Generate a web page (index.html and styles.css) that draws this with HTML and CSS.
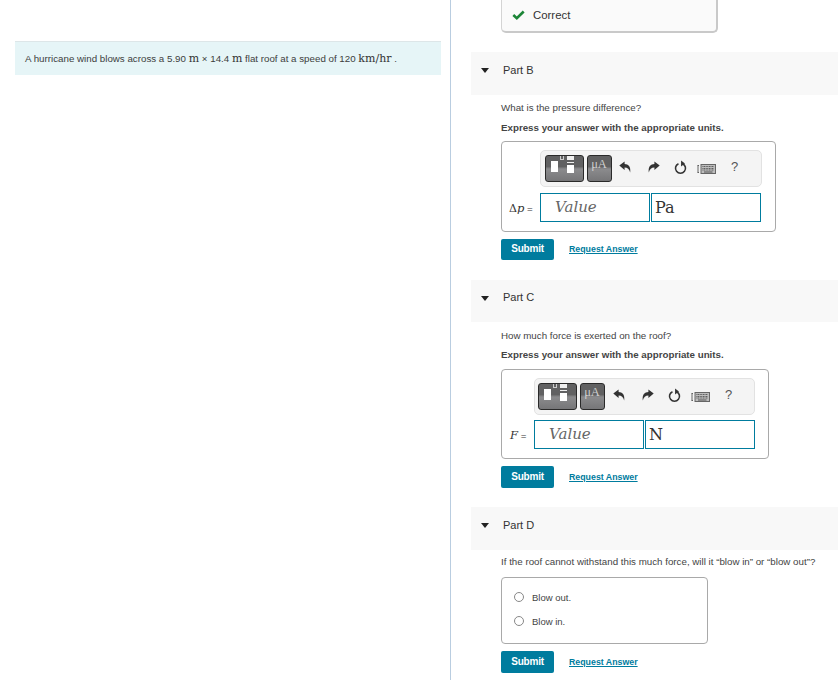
FILE: index.html
```html
<!DOCTYPE html>
<html lang="en">
<head>
<meta charset="utf-8">
<title>Hurricane roof problem</title>
<link rel="stylesheet" href="styles.css">
</head>
<body>
<svg class="defs" width="0" height="0" aria-hidden="true">
  <symbol id="undo" viewBox="0 0 12 12"><path d="M0.3 4.6 L5.6 0.4 V3 C9.4 3 12 5.8 11.2 11.6 C10.2 8.4 8.6 6.6 5.6 6.6 V9 Z"/></symbol>
  <symbol id="reset" viewBox="0 0 14 15"><path d="M4.8 3.4 A5.4 5.4 0 1 0 9.2 3.4" fill="none" stroke="currentColor" stroke-width="1.7"/><path d="M7.6 0 L7.6 6.4 L11.8 3.2 Z" fill="currentColor"/></symbol>
  <symbol id="kbd" viewBox="0 0 19 10"><path d="M0.5 1.5 H2 M0.5 8.5 H2 M1 1.5 V8.5" fill="none" stroke="#555" stroke-width="0.9"/><rect x="4" y="0.5" width="14.5" height="9" fill="#bdbdbd" stroke="#666"/><path d="M5.5 2.5 H17 M5.5 4.5 H17 M5.5 6 H17" stroke="#555" stroke-width="1" stroke-dasharray="1 .6"/><path d="M7 8 H15.5" stroke="#555"/></symbol>
</svg>
<div class="page">
  <aside class="left">
    <p class="intro">A hurricane wind blows across a 5.90 <span class="unit">m</span> × 14.4 <span class="unit">m</span> flat roof at a speed of 120 <span class="unit">km/hr</span> .</p>
  </aside>
  <main class="right">
    <div class="correct"><svg class="check" viewBox="0 0 13 10" width="13" height="10"><path d="M1.3 5 L4.8 8.2 L11.7 1.5" fill="none" stroke="#1c8537" stroke-width="2.6"/></svg><span>Correct</span></div>

    <section class="part part-b">
      <header class="part-head"><span class="tri"></span><span>Part B</span></header>
      <div class="part-body">
        <p class="q">What is the pressure difference?</p>
        <p class="ins">Express your answer with the appropriate units.</p>
        <div class="answer ans-b">
          <div class="toolbar">
            <span class="tbtn tpl"><i class="bl"></i><i class="sm"></i><i class="frac"></i></span>
            <span class="tbtn mu">μA</span>
            <svg class="ic ic1"><use href="#undo"/></svg>
            <svg class="ic ic2 flip"><use href="#undo"/></svg>
            <svg class="rs"><use href="#reset"/></svg>
            <svg class="kb"><use href="#kbd"/></svg>
            <span class="help">?</span>
          </div>
          <div class="row">
            <span class="lab"><span class="sym">Δ<em>p</em></span> =</span>
            <span class="field val">Value</span>
            <span class="field unit-f">Pa</span>
          </div>
        </div>
        <div class="acts"><span class="btn">Submit</span><a class="req" href="#">Request Answer</a></div>
      </div>
    </section>

    <section class="part part-c">
      <header class="part-head"><span class="tri"></span><span>Part C</span></header>
      <div class="part-body">
        <p class="q">How much force is exerted on the roof?</p>
        <p class="ins">Express your answer with the appropriate units.</p>
        <div class="answer ans-c">
          <div class="toolbar">
            <span class="tbtn tpl"><i class="bl"></i><i class="sm"></i><i class="frac"></i></span>
            <span class="tbtn mu">μA</span>
            <svg class="ic ic1"><use href="#undo"/></svg>
            <svg class="ic ic2 flip"><use href="#undo"/></svg>
            <svg class="rs"><use href="#reset"/></svg>
            <svg class="kb"><use href="#kbd"/></svg>
            <span class="help">?</span>
          </div>
          <div class="row">
            <span class="lab"><span class="sym"><em>F</em></span> =</span>
            <span class="field val">Value</span>
            <span class="field unit-f">N</span>
          </div>
        </div>
        <div class="acts"><span class="btn">Submit</span><a class="req" href="#">Request Answer</a></div>
      </div>
    </section>

    <section class="part part-d">
      <header class="part-head"><span class="tri"></span><span>Part D</span></header>
      <div class="part-body">
        <p class="q">If the roof cannot withstand this much force, will it “blow in” or “blow out”?</p>
        <div class="answer ans-d">
          <label class="opt"><span class="radio"></span>Blow out.</label>
          <label class="opt"><span class="radio"></span>Blow in.</label>
        </div>
        <div class="acts"><span class="btn">Submit</span><a class="req" href="#">Request Answer</a></div>
      </div>
    </section>
  </main>
</div>
</body>
</html>
```
FILE: styles.css
```css
* { box-sizing: border-box; }
html, body { margin: 0; padding: 0; background: #fff; }
body { width: 838px; height: 680px; overflow: hidden; font-family: "Liberation Sans", Arial, sans-serif; color: #333; }
.defs { position: absolute; }
p { margin: 0; }
.page { display: flex; height: 680px; }
.left { width: 451px; flex: none; padding: 41px 9px 0 15px; border-right: 1px solid #b9cde0; }
.intro { height: 34px; background: #e6f5f7; border-top: 1px solid #dde6e8; padding: 11px 0 0 10px; font-size: 9.75px; line-height: 12px; color: #3d3d3d; white-space: nowrap; }
.unit { font-family: "DejaVu Serif", "Liberation Serif", serif; font-size: 11px; color: #333; }
.right { flex: 1; padding-left: 20px; min-width: 0; }
.correct { margin-left: 30px; width: 217px; height: 33px; border: 1px solid #d4d4d4; border-top: 0; border-right: 2px solid #c9c9c9; border-bottom: 2px solid #c9c9c9; border-radius: 0 0 5px 5px; background: #fafafa; display: flex; align-items: center; padding: 0 0 2px 10px; font-size: 11.4px; color: #333; }
.check { margin-right: 8px; }
.part-head { height: 43px; background: #f8f8f8; display: flex; align-items: flex-start; padding: 12px 0 0 32px; font-size: 11px; line-height: 13px; position: relative; color: #333; }
.tri { position: absolute; left: 10px; top: 16px; border-left: 4.5px solid transparent; border-right: 4.5px solid transparent; border-top: 5px solid #222; }
.part-b { margin-top: 19px; }
.part-c { margin-top: 20px; }
.part-d { margin-top: 19px; }
.part-c .part-head { height: 42px; padding-top: 11px; }
.part-c .part-body { padding-top: 8px; }
.part-c .ins { margin-top: 7px; }
.part-c .answer { margin-top: 8px; }
.part-d .part-body { padding-top: 6px; }
.part-c .btn, .part-d .btn { height: 22px; line-height: 21px; }
.part-c .acts, .part-d .acts { height: 22px; }
.part-body { padding: 7px 0 0 30px; }
.q { font-size: 9.75px; line-height: 12px; color: #444; white-space: nowrap; }
.ins { margin-top: 8px; font-size: 9.75px; font-weight: bold; line-height: 12px; color: #444; }
.answer { border: 1px solid #a9a9a9; border-radius: 4px; margin-top: 7px; }
.ans-b { width: 275px; height: 91px; padding: 8px 0 0 38px; }
.ans-c { width: 268px; height: 90px; padding: 8px 0 0 32px; }
.part-d .ans-d { width: 207px; height: 67px; margin-top: 9px; padding: 13px 0 0 12px; }
.toolbar { width: 222px; height: 37px; background: #f4f4f4; border: 1px solid #e2e2e2; border-radius: 5px; display: flex; align-items: center; padding-left: 4px; position: relative; color: #444; }
.ans-c .toolbar { width: 221px; padding-left: 3px; }
.tbtn { display: block; height: 27px; border: 1px solid #2a2a2a; border-radius: 3px; background: linear-gradient(#616162 0, #616162 42%, #8b8b8d 52%, #767678 100%); position: relative; color: #d0d0d0; }
.tpl { width: 39px; }
.mu { width: 25px; margin-left: 3px; font-family: "Liberation Serif", serif; font-size: 12.5px; line-height: 16px; text-align: center; padding-right: 1px; }
.bl { position: absolute; left: 5px; top: 5px; width: 7px; height: 11px; background: #fff; }
.sm { position: absolute; left: 14px; top: 0; width: 4px; height: 4px; border: 1px solid #ccc; border-top: 0; }
.frac { position: absolute; left: 21px; top: 0; width: 7px; height: 17px; background: linear-gradient(#eee 0, #eee 4px, transparent 4px, transparent 6px, #eee 6px, #eee 7px, transparent 7px, transparent 9px, #fff 9px); }
.ic { width: 12px; height: 12px; fill: #333; position: absolute; top: 10px; }
.ic1 { left: 78px; }
.ic2 { left: 107px; }
.flip { transform: scaleX(-1); }
.rs { position: absolute; left: 133px; top: 9px; width: 13px; height: 15px; color: #333; }
.kb { position: absolute; left: 156px; top: 13px; width: 19px; height: 10px; }
.help { position: absolute; left: 190px; top: 8px; font-size: 13px; line-height: 15px; color: #555; }
.row { display: flex; align-items: center; margin-top: 6px; position: relative; }
.ans-c .row { margin-top: 5px; }
.lab { position: absolute; font-size: 9.75px; white-space: nowrap; color: #333; }
.sym { font-family: "DejaVu Serif", "Liberation Serif", serif; font-size: 11px; color: #333; }
.sym em { font-style: italic; font-size: 11.5px; }
.ans-b .lab { left: -31px; }
.ans-c .lab { left: -24px; }
.field { display: block; width: 110px; height: 29px; border: 1px solid #007c9e; font-family: "DejaVu Serif", "Liberation Serif", serif; background: #fff; font-size: 15px; line-height: 27px; color: #333; }
.unit-f { font-size: 16px; padding-left: 3px; margin-left: 1px; }
.val { font-style: italic; padding-left: 14px; color: #666; }
.acts { display: flex; align-items: center; margin-top: 7px; height: 21px; }
.btn { width: 53px; height: 21px; background: #007c9e; border-radius: 2px; color: #fff; font-size: 10px; font-weight: bold; letter-spacing: -0.2px; line-height: 20px; text-align: center; }
.req { margin-left: 15px; margin-top: -1px; font-size: 8.8px; font-weight: bold; color: #007c9e; text-decoration: underline; }
.opt { display: flex; align-items: center; height: 12px; margin-bottom: 12px; font-size: 9.5px; color: #444; }
.radio { width: 10px; height: 10px; border: 1px solid #888; border-radius: 50%; background: #fff; margin-right: 8px; }
```
